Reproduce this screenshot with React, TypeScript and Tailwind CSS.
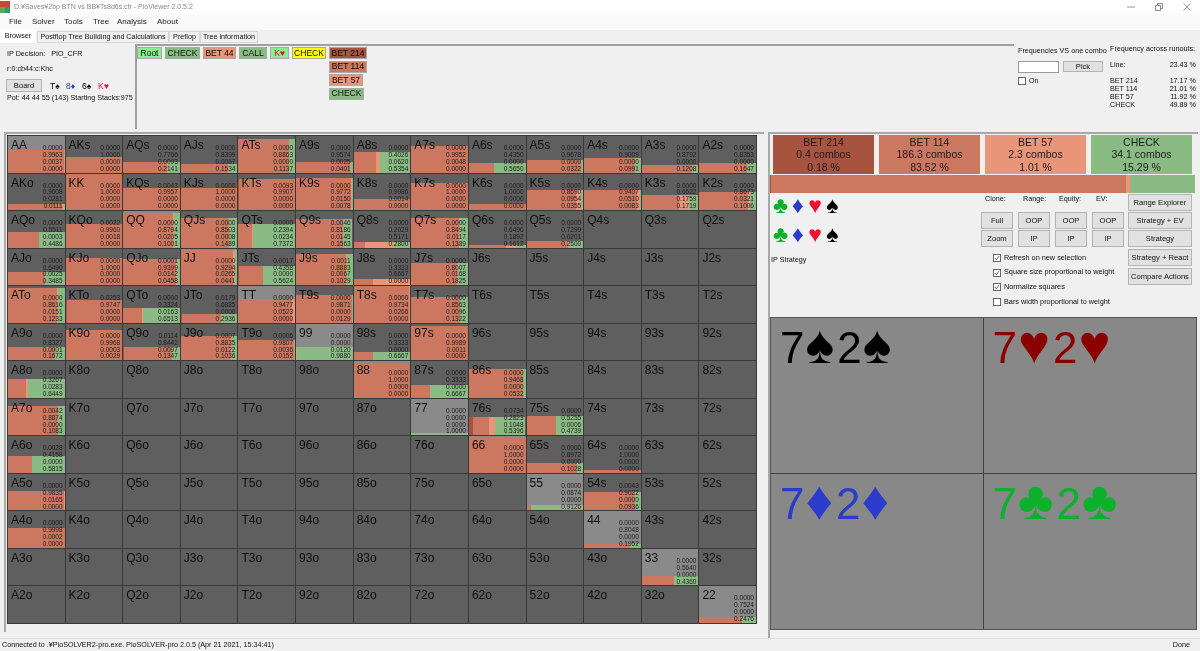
import React from "react";

const R = ["A", "K", "Q", "J", "T", "9", "8", "7", "6", "5", "4", "3", "2"];
// label -> [filled height, bet214, bet114, bet57, check]
const D: Record<string, number[]> = {
  AA: [0.62, 0, 0.9963, 0.0037, 0], AKs: [0.42, 0, 1, 0, 0], AQs: [0.28, 0, 0.7766, 0.0093, 0.2141], AJs: [0.23, 0, 0.8399, 0.0067, 0.1534], ATs: [0.92, 0, 0.8863, 0, 0.1137], A9s: [0.29, 0, 0.9574, 0.0025, 0.0401], A8s: [0.56, 0, 0.4026, 0.062, 0.5354], A7s: [0.74, 0, 0.9952, 0.0048, 0], A6s: [0.27, 0, 0.435, 0, 0.565], A5s: [0.34, 0, 0.9678, 0, 0.0322], A4s: [0.39, 0, 0.9009, 0, 0.0991], A3s: [0.2, 0, 0.8792, 0, 0.1208], A2s: [0.27, 0, 0.8353, 0, 0.1647],
  AKo: [0.16, 0, 0.9608, 0.0281, 0.0111], KK: [0.98, 0, 1, 0, 0], KQs: [0.6, 0.0043, 0.9957, 0, 0], KJs: [0.6, 0, 1, 0, 0], KTs: [0.84, 0.0093, 0.9907, 0, 0], K9s: [0.88, 0, 0.9772, 0.015, 0.0078], K8s: [0.29, 0, 0.9986, 0.0014, 0], K7s: [0.73, 0, 1, 0, 0], K6s: [0.16, 0, 1, 0, 0], K5s: [0.55, 0, 0.869, 0.0954, 0.0355], K4s: [0.56, 0, 0.9407, 0.051, 0.0083], K3s: [0.4, 0, 0.6522, 0.1759, 0.1719], K2s: [0.5, 0, 0.8673, 0.0321, 0.1006],
  AQo: [0.44, 0, 0.5511, 0.0003, 0.4486], KQo: [0.65, 0.0022, 0.996, 0.0018, 0], QQ: [0.96, 0, 0.8794, 0.0205, 0.1001], QJs: [0.82, 0, 0.8503, 0.0008, 0.1489], QTs: [0.66, 0, 0.2394, 0.0234, 0.7372], Q9s: [0.77, 0.0046, 0.8186, 0.0145, 0.1563], Q8s: [0.15, 0, 0.2029, 0.5171, 0.28], Q7s: [0.82, 0, 0.8494, 0.0117, 0.1389], Q6s: [0.07, 0, 0.6496, 0.1892, 0.1612], Q5s: [0.19, 0, 0.7299, 0.0201, 0.25],
  AJo: [0.37, 0, 0.649, 0.0025, 0.3485], KJo: [0.75, 0, 1, 0, 0], QJo: [0.71, 0.0001, 0.9399, 0.0142, 0.0458], JJ: [0.96, 0, 0.9294, 0.0265, 0.0441], JTs: [0.53, 0.0017, 0.4358, 0, 0.5624], J9s: [0.85, 0.0011, 0.8883, 0.0067, 0.1029], J8s: [0.18, 0, 0.3333, 0.6667, 0], J7s: [0.6, 0, 0.8007, 0.0168, 0.1825],
  ATo: [0.94, 0, 0.8616, 0.0151, 0.1233], KTo: [0.62, 0.0253, 0.9747, 0, 0], QTo: [0.39, 0, 0.3324, 0.0163, 0.6513], JTo: [0.24, 0.0179, 0.6885, 0, 0.2936], TT: [0.64, 0, 0.9477, 0.0523, 0], T9s: [0.76, 0, 0.9871, 0, 0.0129], T8s: [1, 0, 0.9734, 0.0266, 0], T7s: [0.69, 0, 0.8563, 0.0096, 0.1322],
  A9o: [0.37, 0, 0.8327, 0.0001, 0.1672], K9o: [0.84, 0, 0.9968, 0.0003, 0.0029], Q9o: [0.37, 0.0114, 0.8442, 0.0097, 0.1347], J9o: [0.66, 0.0007, 0.8835, 0.0122, 0.1036], T9o: [0.56, 0.0006, 0.9807, 0.0036, 0.0152], "99": [0.35, 0, 0, 0.012, 0.988], "98s": [0.23, 0, 0.3333, 0, 0.6667], "97s": [0.95, 0, 0.9989, 0.0011, 0],
  A8o: [0.51, 0, 0.3267, 0.0283, 0.6449], "88": [0.93, 0, 1, 0, 0], "87s": [0.34, 0, 0.3333, 0, 0.6667], "86s": [0.78, 0, 0.9468, 0, 0.0532],
  A7o: [0.8, 0.0042, 0.8874, 0, 0.1083], "77": [0.07, 0, 0, 0, 1], "76s": [0.5, 0.0734, 0.2823, 0.1048, 0.5396], "75s": [0.54, 0, 0.5255, 0.0006, 0.4739],
  A6o: [0.46, 0.0028, 0.4158, 0, 0.5815], "66": [0.98, 0, 1, 0, 0], "65s": [0.26, 0, 0.8972, 0, 0.1028], "64s": [0.09, 0, 1, 0, 0],
  A5o: [0.53, 0, 0.9835, 0.0165, 0], "55": [0.14, 0, 0.0874, 0, 0.9126], "54s": [0.49, 0.0043, 0.9022, 0, 0.0936],
  A4o: [0.55, 0, 0.9998, 0.0002, 0], "44": [0.12, 0, 0.8048, 0, 0.1952],
  "33": [0.25, 0, 0.564, 0, 0.436],
  "22": [0.16, 0, 0.7524, 0, 0.2476],
};

function Cell({ label }: { label: string }) {
  const d = D[label];
  const pair = label.length === 2;
  return (
    <div className={`relative overflow-hidden border-r border-b border-[#383838] ${pair ? "bg-[#8a8a8a]" : "bg-[#5f5f5f]"}`}>
      {d && (
        <div className="absolute left-0 right-0 bottom-0 flex" style={{ height: `${d[0] * 100}%` }}>
          <div className="bg-[#a8533f]" style={{ width: `${d[1] * 100}%` }} />
          <div className="bg-[#cc7860]" style={{ width: `${d[2] * 100}%` }} />
          <div className="bg-[#e8957a]" style={{ width: `${d[3] * 100}%` }} />
          <div className="bg-[#8abb85]" style={{ width: `${d[4] * 100}%` }} />
        </div>
      )}
      <div className="absolute left-[3px] top-[2px] text-[12px] leading-[14px] text-[#0c0c0c]">{label}</div>
      {d && (
        <div className="absolute right-[2px] top-[9px] text-right text-[6.5px] leading-[6.9px] text-[#1c1c1c]">
          {d.slice(1).map((n, i) => (
            <div key={i}>{n.toFixed(4)}</div>
          ))}
        </div>
      )}
    </div>
  );
}

function Btn({ children, className = "" }: { children: React.ReactNode; className?: string }) {
  return (
    <div className={`flex shrink-0 items-center justify-center whitespace-nowrap border border-[#b4b4b4] bg-[#e1e1e1] text-[7.6px] text-[#111] ${className}`}>
      {children}
    </div>
  );
}

function Check({ on, label }: { on?: boolean; label: string }) {
  return (
    <div className="flex h-[14.6px] items-center gap-[3px] whitespace-nowrap text-[7.3px] text-[#111]">
      <div className="flex h-[8px] w-[8px] items-center justify-center border border-[#666] bg-white">
        {on && (
          <svg viewBox="0 0 10 10" className="h-[8px] w-[8px]">
            <path d="M1.5 5 L4 8 L8.5 1.5" fill="none" stroke="#333" strokeWidth="1.2" />
          </svg>
        )}
      </div>
      {label}
    </div>
  );
}

function Node({ children, className = "" }: { children: React.ReactNode; className?: string }) {
  return (
    <div className={`flex h-[12px] shrink-0 items-center justify-center border border-[#a9a9a9] text-[8.5px] text-[#0c0c0c] ${className}`}>
      {children}
    </div>
  );
}

function Action({ a, b, c, className = "" }: { a: string; b: string; c: string; className?: string }) {
  return (
    <div className={`flex h-[39px] w-[101px] flex-col items-center justify-center text-[10.5px] leading-[12.5px] text-[#1a1a1a] ${className}`}>
      <div>{a}</div>
      <div>{b}</div>
      <div>{c}</div>
    </div>
  );
}

function Suits() {
  return (
    <div className="flex gap-[2.3px] text-[23px] leading-[15px]">
      <span className="w-[15px] text-center text-[#0bb02b]">♣</span>
      <span className="w-[15px] text-center text-[#2b3ccb]">♦</span>
      <span className="w-[15px] text-center text-[#f01030]">♥</span>
      <span className="w-[15px] text-center text-black">♠</span>
    </div>
  );
}

function Cards({ suit, className = "" }: { suit: string; className?: string }) {
  return (
    <div className={`whitespace-nowrap pl-[9px] pt-[1px] text-[44px] leading-[50px] ${className}`}>
      7<span className="ml-[1px] text-[54px] leading-[50px] tracking-[3px]">{suit}</span>2<span className="ml-[1px] text-[54px] leading-[50px]">{suit}</span>
    </div>
  );
}

export default function App() {
  return (
    <div className="flex h-[651px] w-[1200px] flex-col overflow-hidden bg-[#f0f0f0] text-[7.2px] text-[#111] blur-[0.3px] [font-family:'Liberation_Sans',Arial,sans-serif]">
      {/* title bar */}
      <div className="flex h-[14px] shrink-0 items-center bg-white">
        <svg viewBox="0 0 10 12" className="h-[12px] w-[10px]">
          <rect width="10" height="6" fill="#cc4433" />
          <rect y="6" width="5" height="6" fill="#55aa55" />
          <rect x="5" y="6" width="5" height="6" fill="#339966" />
        </svg>
        <span className="ml-[4px] text-[7px] text-[#8a8a8a]">D:¥Saves¥2bp BTN vs BB¥Ts8d6s.cfr - PioViewer 2.0.5.2</span>
        <div className="ml-auto flex items-center gap-[20px] pr-[9px]">
          <svg viewBox="0 0 8 8" className="h-[8px] w-[8px]"><path d="M0 4 H8" stroke="#999" /></svg>
          <svg viewBox="0 0 8 8" className="h-[8px] w-[8px]"><path d="M0.5 2.5 H5.5 V7.5 H0.5 Z M2.5 2.5 V0.5 H7.5 V5.5 H5.5" fill="none" stroke="#888" /></svg>
          <svg viewBox="0 0 8 8" className="h-[8px] w-[8px]"><path d="M0.5 0.5 L7.5 7.5 M7.5 0.5 L0.5 7.5" stroke="#999" /></svg>
        </div>
      </div>
      {/* menu */}
      <div className="flex h-[16px] shrink-0 items-center bg-[#fafafa] pl-[9px] text-[8px] text-[#222]">
        <span className="w-[23px]">File</span>
        <span className="w-[32px]">Solver</span>
        <span className="w-[29px]">Tools</span>
        <span className="w-[24px]">Tree</span>
        <span className="w-[40px]">Analysis</span>
        <span>About</span>
      </div>
      {/* tabs */}
      <div className="flex h-[13px] shrink-0 items-end bg-[#f0f0f0] text-[7.2px]">
        <div className="flex h-[14px] w-[36px] items-center justify-center bg-white">Browser</div>
        <div className="ml-[1px] flex h-[12px] w-[132px] items-center justify-center whitespace-nowrap border border-[#d8d8d8]">Postflop Tree Building and Calculations</div>
        <div className="flex h-[12px] w-[31px] items-center justify-center border border-[#d8d8d8]">Preflop</div>
        <div className="flex h-[12px] w-[58px] items-center justify-center whitespace-nowrap border border-[#d8d8d8]">Tree information</div>
      </div>
      {/* top panel */}
      <div className="flex h-[89px] shrink-0">
        <div className="w-[135px] shrink-0 pl-[7px] pt-[5px]">
          <div className="flex h-[13px] items-center gap-[6px]">
            <span>IP Decision:</span>
            <span>PIO_CFR</span>
          </div>
          <div className="mt-[2px] flex h-[13px] items-center">r:0:cb44:c:Khc</div>
          <div className="-ml-[1px] mt-[3px] flex items-center">
            <Btn className="h-[13px] w-[36px]">Board</Btn>
            <div className="ml-[8px] flex gap-[7px] text-[8.5px] leading-[10px]">
              <span className="w-[9px] text-black">T♠</span>
              <span className="w-[9px] text-[#2b3ccb]">8♦</span>
              <span className="w-[9px] text-black">6♠</span>
              <span className="w-[9px] text-[#f01030]">K♥</span>
            </div>
          </div>
          <div className="mt-[1px] whitespace-nowrap">Pot: 44 44 55 (143) Starting Stacks:975</div>
        </div>
        <div className="mt-[1px] mb-[3px] flex w-[879px] shrink-0 items-start gap-[3px] border-l-2 border-t-2 border-[#a0a0a0] pt-[1px]">
          <Node className="w-[25px] bg-[#88ee8e]">Root</Node>
          <Node className="w-[35px] bg-[#8abb85]">CHECK</Node>
          <Node className="w-[33px] bg-[#e8957a]">BET 44</Node>
          <Node className="w-[28px] bg-[#8abb85]">CALL</Node>
          <Node className="w-[19px] bg-[#88ee8e] text-[#e01030]">K♥</Node>
          <Node className="w-[34px] bg-[#ffff00]">CHECK</Node>
          <div className="flex flex-col gap-[1.5px]">
            <Node className="w-[38px] bg-[#a8533f]">BET 214</Node>
            <Node className="w-[38px] bg-[#cc7860]">BET 114</Node>
            <Node className="w-[34px] bg-[#e8957a]">BET 57</Node>
            <Node className="w-[35px] bg-[#8abb85]">CHECK</Node>
          </div>
        </div>
        <div className="w-[92px] shrink-0 pl-[4px] pt-[3px]">
          <div className="whitespace-nowrap">Frequencies VS one combo</div>
          <div className="mt-[4px] flex items-center gap-[4px]">
            <div className="h-[12px] w-[41px] border border-[#999] bg-white" />
            <Btn className="h-[11px] w-[40px]">Pick</Btn>
          </div>
          <div className="mt-[3px] flex items-center gap-[3px]">
            <div className="h-[8px] w-[8px] border border-[#666] bg-white" />
            On
          </div>
        </div>
        <div className="w-[94px] shrink-0 pl-[4px] pr-[4px] pt-[2px] leading-[8px]">
          <div className="whitespace-nowrap">Frequency across runouts:</div>
          <div className="mt-[8px] flex justify-between"><span>Line:</span><span>23.43 %</span></div>
          <div className="mt-[8px] flex justify-between"><span>BET 214</span><span>17.17 %</span></div>
          <div className="flex justify-between"><span>BET 114</span><span>21.01 %</span></div>
          <div className="flex justify-between"><span>BET 57</span><span>11.92 %</span></div>
          <div className="flex justify-between"><span>CHECK</span><span>49.89 %</span></div>
        </div>
      </div>
      {/* main */}
      <div className="flex flex-1 pl-[4px]">
        <div className="mb-[3px] h-[500px] w-[760px] shrink-0 border-l-2 border-t-2 border-[#a8a8a8] pl-[1px] pt-[1px]">
          <div className="grid h-[489px] w-[750px] grid-cols-[repeat(13,1fr)] grid-rows-[repeat(13,1fr)] border-l border-t border-[#383838]">
            {R.map((_, i) =>
              R.map((__, j) => {
                const label = i === j ? R[i] + R[i] : i < j ? R[i] + R[j] + "s" : R[j] + R[i] + "o";
                return <Cell key={label} label={label} />;
              })
            )}
          </div>
        </div>
        <div className="ml-[4px] flex w-[430px] shrink-0 flex-col border-l-2 border-t-2 border-[#a8a8a8] pl-[3px] pt-[1px]">
          <div className="flex gap-[5px]">
            <Action a="BET 214" b="0.4 combos" c="0.18 %" className="bg-[#a8533f]" />
            <Action a="BET 114" b="186.3 combos" c="83.52 %" className="bg-[#cc7860]" />
            <Action a="BET 57" b="2.3 combos" c="1.01 %" className="bg-[#e8957a]" />
            <Action a="CHECK" b="34.1 combos" c="15.29 %" className="bg-[#8abb85]" />
          </div>
          <div className="-ml-[3px] mt-[1px] flex h-[18px] w-[425px]">
            <div className="w-[1px] bg-[#a8533f]" />
            <div className="w-[355px] bg-[#cc7860]" />
            <div className="w-[4px] bg-[#e8957a]" />
            <div className="flex-1 bg-[#8abb85]" />
          </div>
          <div className="flex h-[124px]">
            <div className="w-[208px] pt-[5px]">
              <div><Suits /></div>
              <div className="mt-[14px]"><Suits /></div>
              <div className="-ml-[2px] mt-[13px]">IP Strategy</div>
            </div>
            <div className="w-[147px] pt-[1px]">
              <div className="flex h-[18px] text-[7.2px]">
                <span className="ml-[4px] w-[38px]">Clone:</span>
                <span className="w-[36px]">Range:</span>
                <span className="w-[37px]">Equity:</span>
                <span>EV:</span>
              </div>
              <div className="grid w-[143px] grid-cols-4 gap-x-[5px] gap-y-[1px]">
                {["Full", "OOP", "OOP", "OOP", "Zoom", "IP", "IP", "IP"].map((t, i) => (
                  <Btn key={i} className="h-[17px]">{t}</Btn>
                ))}
              </div>
              <div className="ml-[12px] mt-[4px]">
                <Check on label="Refresh on new selection" />
                <Check on label="Square size proportional to weight" />
                <Check on label="Normalize squares" />
                <Check label="Bars width proportional to weight" />
              </div>
            </div>
            <div className="flex w-[64px] flex-col pt-[1px]">
              <Btn className="h-[17px]">Range Explorer</Btn>
              <Btn className="mt-[1px] h-[17px]">Strategy + EV</Btn>
              <Btn className="mt-[1px] h-[17px]">Strategy</Btn>
              <Btn className="mt-[2px] h-[17px]">Strategy + React</Btn>
              <Btn className="mt-[2px] h-[17px]">Compare Actions</Btn>
            </div>
          </div>
          <div className="-ml-[3px] grid h-[313px] w-[427px] grid-cols-2 grid-rows-2 border border-[#555] bg-[#888888]">
            <div className="border-r border-b border-[#444]"><Cards suit="♠" className="text-black" /></div>
            <div className="border-b border-[#444]"><Cards suit="♥" className="text-[#8b0000]" /></div>
            <div className="border-r border-[#444]"><Cards suit="♦" className="text-[#2b3ccb]" /></div>
            <div><Cards suit="♣" className="text-[#0bb02b]" /></div>
          </div>
        </div>
      </div>
      {/* status bar */}
      <div className="flex h-[13px] shrink-0 items-center justify-between border-t border-[#e0e0e0] pl-[2px] pr-[10px]">
        <span>Connected to .¥PioSOLVER2-pro.exe. PioSOLVER-pro 2.0.5 (Apr 21 2021, 15:34:41)</span>
        <span>Done</span>
      </div>
    </div>
  );
}
